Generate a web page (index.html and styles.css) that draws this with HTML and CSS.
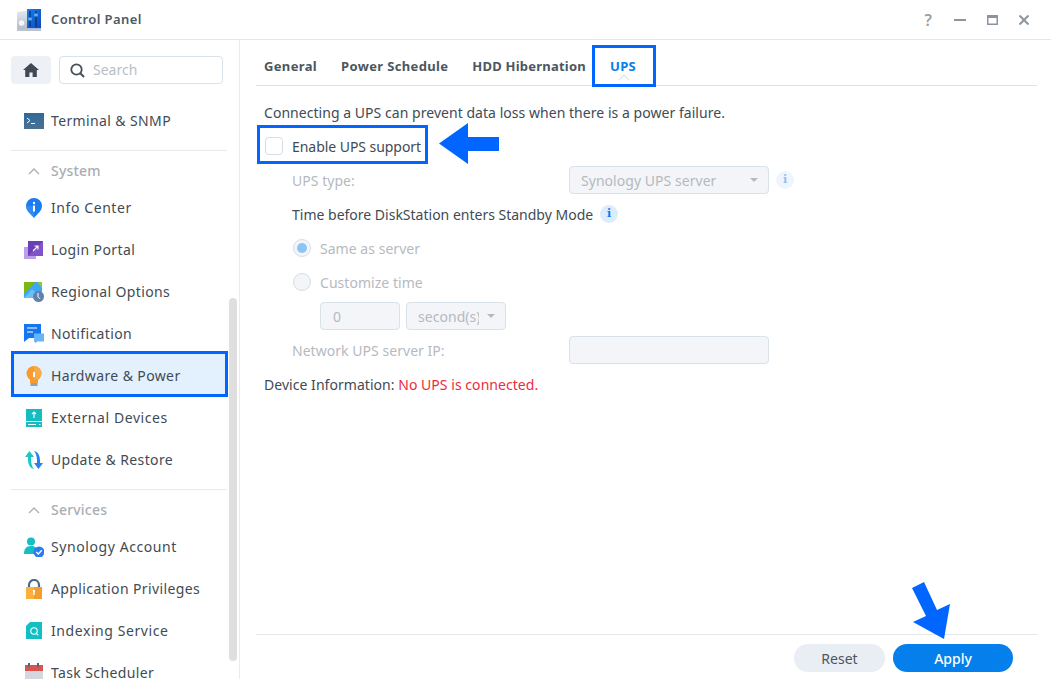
FILE: index.html
```html
<!DOCTYPE html>
<html lang="en">
<head>
<meta charset="utf-8">
<title>Control Panel</title>
<link rel="stylesheet" href="styles.css">
</head>
<body>
<div class="window">
  <header class="titlebar">
    <svg class="app-icon" width="24" height="22" viewBox="0 0 24 22">
      <defs>
        <linearGradient id="cpblue" x1="0" y1="0" x2="1" y2="1"><stop offset="0" stop-color="#1a7ff0"/><stop offset="1" stop-color="#0a49b8"/></linearGradient>
        <linearGradient id="cpgrey" x1="0" y1="0" x2="0" y2="1"><stop offset="0" stop-color="#e4e8ef"/><stop offset="1" stop-color="#b4bccb"/></linearGradient>
      </defs>
      <path d="M0 3l10-1.500V20H0z" fill="url(#cpgrey)"/>
      <rect x="10" y="0" width="14" height="19.500" fill="url(#cpblue)"/>
      <rect x="0" y="19.500" width="24" height="2.500" fill="#bcc2cf"/>
      <circle cx="4.500" cy="14" r="2.700" fill="#f4f6f9"/>
      <path d="M13 2v16M19 2v16" stroke="#0c2f73" stroke-width="1.300"/>
      <rect x="11.200" y="8.500" width="3.600" height="3" rx="1" fill="#5fb0f5"/>
      <rect x="17.200" y="4.500" width="3.600" height="3" rx="1" fill="#5fb0f5"/>
    </svg>
    <span class="app-title">Control Panel</span>
    <div class="win-controls">
      <span class="win-help">?</span>
      <svg width="12" height="10" viewBox="0 0 12 10"><path d="M0 5h12" stroke="#8d949c" stroke-width="2"/></svg>
      <svg width="11" height="10" viewBox="0 0 11 10"><path d="M0 0h11v10H0z" fill="#8d949c"/><path d="M1.500 3h8v5.500h-8z" fill="#fff"/></svg>
      <svg width="10" height="10" viewBox="0 0 10 10"><path d="M.5.500l9 9M9.500.500l-9 9" stroke="#8d949c" stroke-width="2"/></svg>
    </div>
  </header>
  <div class="body">
    <aside class="sidebar">
      <div class="side-top">
        <button class="home-btn" aria-label="Home">
          <svg width="16" height="14" viewBox="0 0 16 14"><path d="M8 0L0 7h2.200v7h4.200V9.500h3.200V14h4.200V7H16z" fill="#3f4a55"/></svg>
        </button>
        <div class="search">
          <svg width="15" height="15" viewBox="0 0 15 15"><circle cx="6.500" cy="6.500" r="5.200" fill="none" stroke="#46505a" stroke-width="1.800"/><path d="M10.300 10.300l3.700 3.700" stroke="#46505a" stroke-width="2"/></svg>
          <span class="search-ph">Search</span>
        </div>
      </div>
      <nav class="nav">
        <a class="nav-item">
          <svg class="ic" width="20" height="16" viewBox="0 0 20 16"><defs><linearGradient id="term" x1="0" y1="0" x2="0" y2="1"><stop offset="0" stop-color="#2c6a9e"/><stop offset="1" stop-color="#4d7190"/></linearGradient></defs><rect width="20" height="16" fill="url(#term)"/><path d="M3 5l3 2.500-3 2.500" fill="none" stroke="#fff" stroke-width="1"/><path d="M7 10.500h4" stroke="#fff"/></svg>
          <span>Terminal &amp; SNMP</span>
        </a>
        <div class="sep"></div>
        <div class="nav-head"><svg width="12" height="7" viewBox="0 0 12 7"><path d="M1 6l5-5 5 5" fill="none" stroke="#a9aeb4" stroke-width="1.300"/></svg><span>System</span></div>
        <a class="nav-item roomy">
          <svg class="ic" width="20" height="20" viewBox="0 0 20 20"><path d="M10 0a8 8 0 0 1 8 8c0 5-5 8-8 12-3-4-8-7-8-12a8 8 0 0 1 8-8z" fill="#1b7cf2"/><path d="M10 20c-3-4-8-7-8-12h8z" fill="#3d97f8" opacity=".6"/><circle cx="10" cy="5" r="1.200" fill="#fff"/><path d="M9 7.500h2v6H9z" fill="#fff"/></svg>
          <span>Info Center</span>
        </a>
        <a class="nav-item">
          <svg class="ic" width="20" height="20" viewBox="0 0 20 20"><rect x="0" y="7" width="12" height="12" fill="#bd9ee8"/><rect x="4" y="1" width="15" height="15" fill="#6b3fb5"/><path d="M4 16L19 1v15z" fill="#7f54c8"/><path d="M9 11l5-5M10.500 6H14v3.500" fill="none" stroke="#fff" stroke-width="1.100"/></svg>
          <span>Login Portal</span>
        </a>
        <a class="nav-item">
          <svg class="ic" width="20" height="20" viewBox="0 0 20 20"><path d="M0 0h18v16H0z" fill="#3fa6f2"/><path d="M0 0h11L6 6 0 12z" fill="#79b814"/><path d="M13 0h5v6z" fill="#8ccb2b"/><path d="M0 16l8-9 9 9z" fill="#6dc0f7"/><circle cx="14.500" cy="14.500" r="5.500" fill="#5f83ad"/><path d="M14 11v3.800l2 2" fill="none" stroke="#fff" stroke-width="1"/></svg>
          <span>Regional Options</span>
        </a>
        <a class="nav-item">
          <svg class="ic" width="20" height="20" viewBox="0 0 20 20"><path d="M0 0h17v14H5l-5 4z" fill="#1577ef"/><path d="M3 4h10M3 8h6" stroke="#fff" stroke-width="1.200"/><path d="M10 9.500h10v8h-7l-1 1.500-2-1.500z" fill="#66b5fb"/></svg>
          <span>Notification</span>
        </a>
        <a class="nav-item active">
          <svg class="ic" width="20" height="20" viewBox="0 0 20 20"><circle cx="10" cy="7.500" r="7.500" fill="#f89a2e"/><path d="M10 0a7.500 7.500 0 0 1 0 15z" fill="#f7ab48"/><path d="M6 13h8v4H6z" fill="#f89a2e"/><path d="M6.500 17h7v3h-7z" fill="#9b9fa5"/><path d="M9 6h2v5H9z" fill="#fff"/></svg>
          <span>Hardware &amp; Power</span>
        </a>
        <a class="nav-item roomy">
          <svg class="ic" width="20" height="20" viewBox="0 0 20 20"><path d="M2 1h16v18H2z" fill="#13bdc0"/><path d="M2 13h16v1H2z" fill="#fff"/><path d="M4 16h8v1H4zM15 16h1.500v1H15z" fill="#fff"/><path d="M10 4v6M8 6l2-2 2 2" fill="none" stroke="#fff" stroke-width="1.100"/></svg>
          <span>External Devices</span>
        </a>
        <a class="nav-item">
          <svg class="ic" width="20" height="20" viewBox="0 0 20 20"><path d="M10 19C5.500 18 4 14 4 9V7H1l4.500-6L10 7H7v2c0 4 1 8 3 10z" fill="#1bc7c9"/><path d="M10 19C5.500 18 4 14 4 9V7H1l4.500-6L10 7H7v2c0 4 1 8 3 10z" fill="#2a80f0" transform="rotate(180 10 10)"/></svg>
          <span>Update &amp; Restore</span>
        </a>
        <div class="sep"></div>
        <div class="nav-head"><svg width="12" height="7" viewBox="0 0 12 7"><path d="M1 6l5-5 5 5" fill="none" stroke="#a9aeb4" stroke-width="1.300"/></svg><span>Services</span></div>
        <a class="nav-item roomy">
          <svg class="ic" width="20" height="20" viewBox="0 0 20 20"><circle cx="7" cy="4.500" r="4" fill="#16bdc4"/><path d="M0 17c0-5 2-8 7-8s6 2 7 8z" fill="#16bdc4"/><circle cx="15" cy="15" r="5.500" fill="#2b7cee"/><path d="M12.300 15l2 2 3.500-3.800" fill="none" stroke="#fff" stroke-width="1.300"/></svg>
          <span>Synology Account</span>
        </a>
        <a class="nav-item">
          <svg class="ic" width="20" height="20" viewBox="0 0 20 20"><path d="M5 9V6a5 5 0 0 1 10 0v3" fill="none" stroke="#4d6a8a" stroke-width="2.200"/><path d="M2 8h16v12H2z" fill="#fbb13c"/><path d="M10 8h8v12h-8z" fill="#f59c2e"/><path d="M9.300 12h1.400v4H9.300z" fill="#fff"/><circle cx="10" cy="12" r="1.200" fill="#fff"/></svg>
          <span>Application Privileges</span>
        </a>
        <a class="nav-item roomy">
          <svg class="ic" width="20" height="20" viewBox="0 0 20 20"><path d="M6 1h12v17H2V5z" fill="#13bfc2"/><circle cx="10" cy="10" r="3.200" fill="none" stroke="#fff" stroke-width="1.100"/><path d="M12.300 12.300l2 2" stroke="#fff" stroke-width="1.100"/></svg>
          <span>Indexing Service</span>
        </a>
        <a class="nav-item">
          <svg class="ic" width="20" height="20" viewBox="0 0 20 20"><path d="M1 2h18v6H1z" fill="#d9534f"/><path d="M1 8h18v12H1z" fill="#d4d8de"/><path d="M5 0v4M14 0v4" stroke="#5c6570" stroke-width="2"/></svg>
          <span>Task Scheduler</span>
        </a>
      </nav>
      <div class="scrollbar"></div>
    </aside>
    <main class="main">
      <div class="tabs">
        <span class="tab">General</span>
        <span class="tab">Power Schedule</span>
        <span class="tab tab-hdd">HDD Hibernation</span>
        <span class="tab tab-on">UPS</span>
      </div>
      <div class="form">
        <div class="row">Connecting a UPS can prevent data loss when there is a power failure.</div>
        <div class="row check-row tight"><span class="checkbox"></span><span>Enable UPS support</span></div>
        <div class="row indent field off">
          <span class="lbl">UPS type:</span>
          <span class="ctl combo wide"><span>Synology UPS server</span><i class="caret"></i></span>
          <span class="info faint">i</span>
        </div>
        <div class="row indent standby"><span>Time before DiskStation enters Standby Mode</span><span class="info">i</span></div>
        <div class="row indent off radio-row"><span class="radio on"></span><span>Same as server</span></div>
        <div class="row indent off radio-row"><span class="radio"></span><span>Customize time</span></div>
        <div class="row time-row off">
          <span class="ctl num">0</span>
          <span class="ctl combo unit"><span class="unit-text">second(s)</span><i class="caret"></i></span>
        </div>
        <div class="row indent field off">
          <span class="lbl">Network UPS server IP:</span>
          <span class="ctl wide"></span>
        </div>
        <div class="row"><span>Device Information:&nbsp;</span><span class="err">No UPS is connected.</span></div>
      </div>
      <div class="footer">
        <button class="btn reset">Reset</button>
        <button class="btn apply">Apply</button>
      </div>
    </main>
  </div>

  <div class="mark mark-side"></div>
  <div class="mark mark-tab"></div>
  <div class="mark mark-check"></div>
  <svg class="arrow arrow-left" width="60" height="41" viewBox="0 0 60 41"><path d="M0 20.500L29 0v14h31v14H29v13z" fill="#0066ff"/></svg>
  <svg class="arrow arrow-down" width="38" height="57" viewBox="0 0 38 57"><path d="M0 6L12 0l13 28 13-6-6 35L1 40l13-6z" fill="#0066ff"/></svg>
</div>
</body>
</html>
```
FILE: styles.css
```css
* { box-sizing: border-box; }
html, body { margin: 0; height: 100%; }
body { background: #fff; font-family: "Noto Sans", sans-serif; font-size: 14px; color: #414b55; overflow: hidden; }
.window { position: relative; width: 1051px; height: 679px; display: flex; flex-direction: column; overflow: hidden; }

.titlebar { flex: none; height: 40px; display: flex; align-items: center; padding: 0 22px 0 17px; border-bottom: 1px solid #e3e7ec; }
.app-icon { margin-top: 1px; }
.app-title { margin: -2px 0 0 10px; font-size: 13px; font-weight: 600; color: #505a64; letter-spacing: .4px; }
.win-controls { margin-left: auto; display: flex; align-items: center; gap: 21px; }
.win-help { font-size: 16px; font-weight: 600; color: #9aa0a7; line-height: 1; margin-right: 1px; }

.body { flex: 1; min-height: 0; display: flex; }
.sidebar { position: relative; flex: none; width: 240px; height: 639px; overflow: hidden; border-right: 1px solid #e8ebef; padding: 16px 0 0 11px; }
.side-top { display: flex; gap: 8px; height: 28px; }
.home-btn { width: 40px; height: 28px; padding: 0; border: 0; border-radius: 4px; background: #edf1f6; display: flex; align-items: center; justify-content: center; }
.search { width: 164px; height: 28px; border: 1px solid #d9e1e9; border-radius: 4px; display: flex; align-items: center; gap: 8px; padding-left: 10px; }
.search-ph { font-size: 14px; color: #b9bec4; margin-top: -1px; }
.nav { width: 216px; margin-top: 16px; }
.nav-item { height: 42px; display: flex; align-items: center; gap: 7px; padding-left: 13px; font-size: 14px; color: #414b55; white-space: nowrap; letter-spacing: .38px; }
.nav-item span { display: block; margin-top: -2px; }
.nav-item.roomy { letter-spacing: .58px; }
.ic { flex: none; }
.nav-item.active { background: #e3f0fd; box-shadow: 0 -3px 0 #e3f0fd; }
.sep { height: 1px; background: #e8ebef; margin: 8px 0 0 0; }
.nav-head { height: 36px; padding: 4px 0 0 17px; display: flex; align-items: center; gap: 11px; font-size: 14px; font-weight: 500; color: #a9aeb4; letter-spacing: .2px; }
.nav-head span { margin-top: -2px; }
.scrollbar { position: absolute; left: 229px; top: 258px; width: 8px; height: 363px; border-radius: 4px; background: #dfdfdf; }

.main { flex: 1; min-width: 0; height: 639px; display: flex; flex-direction: column; padding: 0 14px 0 16px; }
.tabs { flex: none; height: 46px; display: flex; gap: 24px; padding: 6px 0 0 8px; border-bottom: 1px solid #dbe2ea; align-items: center; }
.tab { font-size: 13px; font-weight: 700; color: #4c565f; letter-spacing: .35px; }
.tab-hdd { letter-spacing: .22px; }
.tab-on { color: #057feb; position: relative; }
.tab-on::after { content: ""; position: absolute; left: 50%; bottom: -9px; width: 7px; height: 7px; margin-left: -3px; transform: rotate(45deg); border-left: 1px solid #dbe2ea; border-top: 1px solid #dbe2ea; background: #fff; }

.form { flex: 1; padding: 9px 0 0 8px; font-size: 14px; letter-spacing: .04px; }
.row { height: 34px; display: flex; align-items: center; white-space: nowrap; }
.row.tight { letter-spacing: -.05px; }
.row.standby { letter-spacing: 0; }
.indent { padding-left: 28px; }
.off { color: #b5babf; }
.check-row { gap: 9px; padding-left: 1px; }
.checkbox { width: 18px; height: 18px; border: 1px solid #d5dde6; border-radius: 4px; background: #fff; }
.lbl { width: 277px; flex: none; }
.ctl { height: 28px; background: #f3f5f9; border: 1px solid #d9e1e9; border-radius: 4px; display: flex; align-items: center; color: #b5babf; }
.wide { width: 200px; }
.combo { padding: 0 10px 0 11px; justify-content: space-between; }
.caret { width: 0; height: 0; border: 4px solid transparent; border-top: 4px solid #b5babf; border-bottom: 0; }
.info { margin-left: 7px; width: 18px; height: 18px; border-radius: 50%; background: #dcecfd; color: #0a7bea; font: 700 11px/18px "DejaVu Serif", serif; text-align: center; letter-spacing: 0; }
.info.faint { background: #eef5fd; color: #8ec1f4; }
.radio-row { gap: 9px; padding-left: 29px; }
.radio { width: 18px; height: 18px; border-radius: 50%; border: 1px solid #d5dde6; background: #f3f5f9; display: flex; align-items: center; justify-content: center; }
.radio.on::after { content: ""; width: 10px; height: 10px; border-radius: 50%; background: #8cc4f6; }
.time-row { padding-left: 56px; gap: 6px; }
.num { width: 80px; padding-left: 12px; }
.unit { width: 100px; }
.unit-text { width: 61px; overflow: hidden; }
.err { color: #ee2b40; }

.footer { flex: none; height: 45px; border-top: 1px solid #e3e7ec; display: flex; justify-content: flex-end; gap: 8px; padding: 9px 24px 0 0; }
.btn { height: 28px; border: 0; border-radius: 14px; font-family: inherit; font-size: 14px; padding: 0; }
.reset { width: 91px; background: #e9edf4; color: #4c565f; }
.apply { width: 120px; background: #057feb; color: #fff; font-weight: 500; }

.mark { position: absolute; border: 3px solid #0066ff; }
.mark-side { left: 11px; top: 351px; width: 217px; height: 46px; }
.mark-tab { left: 592px; top: 45px; width: 64px; height: 42px; }
.mark-check { left: 257px; top: 125px; width: 171px; height: 39px; }
.arrow { position: absolute; }
.arrow-left { left: 439px; top: 123px; }
.arrow-down { left: 912px; top: 582px; }
```
